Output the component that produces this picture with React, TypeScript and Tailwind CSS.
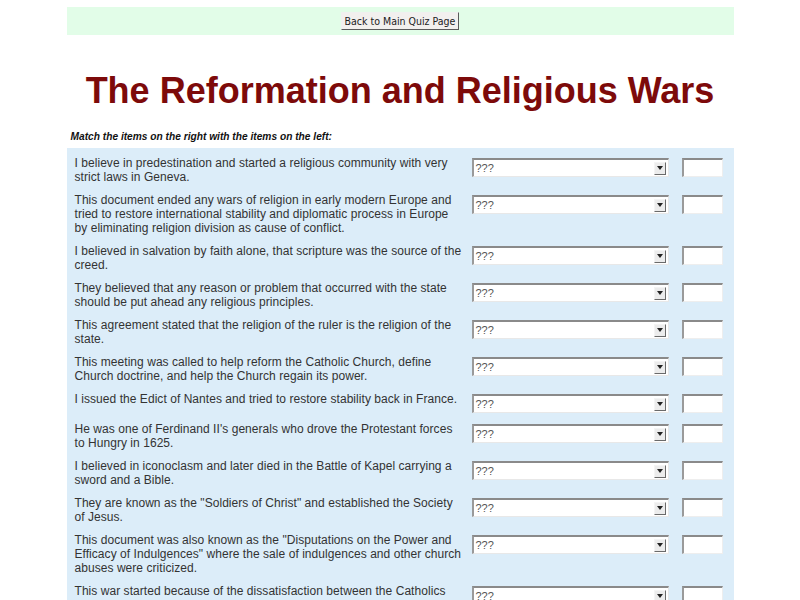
const questions: string[] = [
  "I believe in predestination and started a religious community with very strict laws in Geneva.",
  "This document ended any wars of religion in early modern Europe and tried to restore international stability and diplomatic process in Europe by eliminating religion division as cause of conflict.",
  "I believed in salvation by faith alone, that scripture was the source of the creed.",
  "They believed that any reason or problem that occurred with the state should be put ahead any religious principles.",
  "This agreement stated that the religion of the ruler is the religion of the state.",
  "This meeting was called to help reform the Catholic Church, define Church doctrine, and help the Church regain its power.",
  "I issued the Edict of Nantes and tried to restore stability back in France.",
  "He was one of Ferdinand II's generals who drove the Protestant forces to Hungry in 1625.",
  "I believed in iconoclasm and later died in the Battle of Kapel carrying a sword and a Bible.",
  "They are known as the \"Soldiers of Christ\" and established the Society of Jesus.",
  "This document was also known as the \"Disputations on the Power and Efficacy of Indulgences\" where the sale of indulgences and other church abuses were criticized.",
  "This war started because of the dissatisfaction between the Catholics and Protestants with the Peace of Augsburg allowing the leaders of each state to choose.",
];

// Old-style dropdown with the little grey arrow button
function AnswerSelect() {
  return (
    <div className="mt-[2px] ml-[9px] flex h-[19px] w-[197px] shrink-0 items-center border-t-2 border-l-2 border-t-[#8a8a8a] border-l-[#9a9a9a] border-b border-r border-b-[#e8e8e8] border-r-[#e8e8e8] bg-white">
      <span className="flex-1 pl-[2px] text-[11px] leading-none text-[#555]">???</span>
      <span className="mr-[2px] flex h-[13px] w-[12px] items-center justify-center border border-t-[#f4f4f4] border-l-[#f4f4f4] border-b-[#6a6a6a] border-r-[#6a6a6a] bg-[#ececec]">
        <svg width="6" height="4" viewBox="0 0 6 4">
          <path d="M0 0 L6 0 L3 4 Z" fill="#222" />
        </svg>
      </span>
    </div>
  );
}

function QuestionRow({ text }: { text: string }) {
  return (
    <div className="flex items-start pt-[4px] pb-[5px]">
      <div className="w-[396px] shrink-0 pl-[8px] text-[12px] leading-[14px] text-[#333] tracking-[0.05px]">
        {text}
      </div>
      <AnswerSelect />
      <input
        type="text"
        className="mt-[2px] ml-[13px] h-[19px] w-[41px] shrink-0 border-t-2 border-l-2 border-t-[#8a8a8a] border-l-[#9a9a9a] border-b border-r border-b-[#eeeeee] border-r-[#eeeeee] bg-white outline-none"
      />
    </div>
  );
}

export default function App() {
  return (
    <div className="min-h-[600px] bg-white font-['Liberation_Sans',Arial,sans-serif]">
      <div className="mx-auto w-[667px] pt-[7px]">
        <div className="flex h-[28px] items-center justify-center bg-[#e2fde8]">
          <button className="h-[18px] border border-t-[#f0f0f0] border-l-[#f0f0f0] border-b-[#5a5a5a] border-r-[#5a5a5a] bg-[#f2f0ee] px-[3px] font-['DejaVu_Sans_Condensed','DejaVu_Sans',sans-serif] text-[10.5px] leading-none text-[#222]">
            Back to Main Quiz Page
          </button>
        </div>

        <h1 className="mt-[35px] text-center text-[36px] font-bold leading-[41px] text-[#7d0a0a]">
          The Reformation and Religious Wars
        </h1>

        <p className="mt-[19px] pl-[4px] text-[10.2px] font-bold italic leading-[13px] text-[#111]">
          Match the items on the right with the items on the left:
        </p>

        <div className="mt-[5px] bg-[#dcedf9] pt-[4px] pb-[20px]">
          {questions.map((q, i) => (
            <QuestionRow key={i} text={q} />
          ))}
        </div>
      </div>
    </div>
  );
}
